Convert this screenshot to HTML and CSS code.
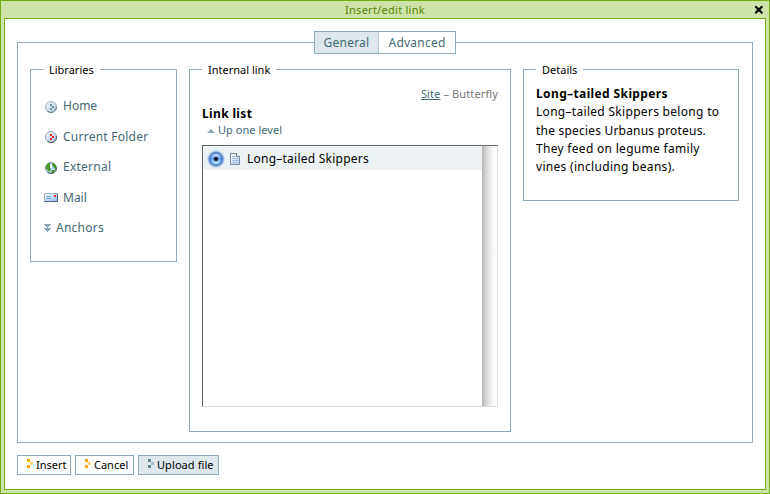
FILE: index.html
```html
<!DOCTYPE html>
<html lang="en">
<head>
<meta charset="utf-8">
<title>Insert/edit link</title>
<link rel="stylesheet" href="styles.css">
</head>
<body>
<div class="window">
  <header class="titlebar"><span class="title">Insert/edit link</span>
    <svg class="close" width="10" height="10" viewBox="0 0 10 10"><path d="M1.3 1.3l7 7M8.3 1.3l-7 7" stroke="#000" stroke-width="2.2"/></svg>
  </header>
  <main class="content">
    <section class="main-panel">
      <nav class="tabs"><a class="tab active">General</a><a class="tab">Advanced</a></nav>
      <div class="columns">
        <section class="group libraries">
          <h2 class="legend">Libraries</h2>
          <ul class="lib-list">
            <li><svg class="ico" width="14" height="14" viewBox="0 0 14 14"><defs><linearGradient id="ball" x2="1" y2="1"><stop stop-color="#f4fafc"/><stop offset="1" stop-color="#b3ced8"/></linearGradient></defs><circle cx="7" cy="7" r="5.5" fill="url(#ball)" stroke="#9cb6c0"/><path d="M12.5 7A5.5 5.5 0 0 1 3.5 11.2" fill="none" stroke="#5b7987"/><path d="M6 4h2v2H6zM8 6h2v2H8zM6 8h2v2H6z" fill="#6b909f"/></svg><span>Home</span></li>
            <li><svg class="ico" width="14" height="14" viewBox="0 0 14 14"><defs><linearGradient id="ball2" x2="1" y2="1"><stop stop-color="#f6faff"/><stop offset="1" stop-color="#a5c8f4"/></linearGradient></defs><circle cx="7" cy="7" r="5.5" fill="url(#ball2)" stroke="#a0a3aa"/><path d="M12.5 6A5.5 5.5 0 0 1 3.5 11.2" fill="none" stroke="#4c5057"/><path d="M6 4h2v2H6zM8 6h2v2H8zM6 8h2v2H6z" fill="#e5271c"/></svg><span class="wide">Current Folder</span></li>
            <li><svg class="ico" width="14" height="14" viewBox="0 0 14 14"><circle cx="7" cy="7" r="5.5" fill="#b9d6fa" stroke="#8296a4"/><path d="M2 6l1-3 3-1.5V4l1 2-1 1 1 2-2 2-1-2-2-1zM8 2l3 1 1.5 3v2L11 8 9.5 6 8.5 5zM8 9l2 0 1 1-2 2H7z" fill="#489623"/><path d="M12.5 7A5.5 5.5 0 0 1 3.5 11.2" fill="none" stroke="#4f5f58"/><path d="M6 4h2v3H6z" fill="#f2f9ff"/></svg><span class="wide">External</span></li>
            <li><svg class="ico" width="14" height="14" viewBox="0 0 14 14"><defs><linearGradient id="mail" x2="1" y2="1"><stop stop-color="#fff"/><stop offset="1" stop-color="#90bdf5"/></linearGradient></defs><path d="M.5 2.5h13v8H.5z" fill="url(#mail)" stroke="#a3adba"/><path d="M.5 10.5h13v-8" fill="none" stroke="#566174"/><path d="M2 5.5h5M2 7.5h5" stroke="#6a9fe3"/><path d="M10 4h2v2h-2z" fill="#ee2b20"/></svg><span>Mail</span></li>
            <li class="anchors"><svg class="ico" width="7" height="9" viewBox="0 0 7 9"><path d="M0 0h7v1H6v1H5v1H4v1H3V3H2V2H1V1H0zM0 4h7v1H6v1H5v1H4v1H3V7H2V6H1V5H0z" fill="#86a6b3"/></svg><span class="wide">Anchors</span></li>
          </ul>
        </section>
        <section class="group internal">
          <h2 class="legend">Internal link</h2>
          <p class="crumbs"><a>Site</a> – Butterfly</p>
          <h3 class="list-title">Link list</h3>
          <p class="up"><i class="tri"></i><span>Up one level</span></p>
          <div class="listbox">
            <div class="rows">
              <div class="row">
                <svg class="radio" width="18" height="18" viewBox="0 0 18 18"><defs><linearGradient id="orb" x2="0" y2="1"><stop stop-color="#dceaff"/><stop offset=".45" stop-color="#5f9aea"/><stop offset="1" stop-color="#c8f6ff"/></linearGradient><radialGradient id="halo"><stop offset=".72" stop-color="#5b93d6"/><stop offset="1" stop-color="#a9caec" stop-opacity=".35"/></radialGradient></defs><circle cx="9" cy="9" r="9" fill="url(#halo)"/><circle cx="9" cy="9" r="6" fill="url(#orb)" stroke="#2f62b4" stroke-width=".9"/><circle cx="9" cy="9" r="2.1" fill="#050b1b"/></svg>
                <svg class="page" width="10" height="12" viewBox="0 0 10 12"><defs><linearGradient id="sheet" x2="1" y2="1"><stop stop-color="#fff"/><stop offset="1" stop-color="#a9cbf5"/></linearGradient></defs><path d="M.5.5h6l3 3v8h-9z" fill="url(#sheet)" stroke="#7d8b99"/><path d="M6.5.5v3h3" fill="#fff" stroke="#6d7985"/><path d="M2 3.5h3M2 5.5h6M2 7.5h6M2 9.5h6" stroke="#a3bddb"/></svg>
                <span class="wide">Long–tailed Skippers</span>
              </div>
            </div>
            <div class="scroll"></div>
          </div>
        </section>
        <section class="group details">
          <h2 class="legend">Details</h2>
          <div class="desc"><strong>Long–tailed Skippers</strong><br>Long–tailed Skippers belong to<br><span class="snug">the species Urbanus proteus.</span><br>They feed on legume family<br>vines (including beans).</div>
        </section>
      </div>
    </section>
    <footer class="buttons">
      <button class="btn insert"><svg width="6" height="9" viewBox="0 0 6 9"><path d="M0 0h3v3H0zM0 6h3v3H0z" fill="#ffa500"/><path d="M3 3h3v3H3z" fill="#ffd27f"/></svg><span>Insert</span></button>
      <button class="btn cancel"><svg width="6" height="9" viewBox="0 0 6 9"><path d="M0 0h3v3H0zM0 6h3v3H0z" fill="#ffa500"/><path d="M3 3h3v3H3z" fill="#ffd27f"/></svg><span>Cancel</span></button>
      <button class="btn upload"><svg width="6" height="9" viewBox="0 0 6 9"><path d="M0 0h3v3H0zM0 6h3v3H0z" fill="#5f8796"/><path d="M3 3h3v3H3z" fill="#a5bdc8"/></svg><span>Upload file</span></button>
    </footer>
  </main>
</div>
</body>
</html>
```
FILE: styles.css
```css
* { box-sizing: border-box; }
body { margin: 0; background: #fff; color: #000; font: 12px/18px "Noto Sans", "Open Sans", sans-serif; }
h2, h3, p, ul { margin: 0; padding: 0; list-style: none; font-weight: 400; }
.window { width: 770px; height: 494px; background: #cee3a8; border: 1px solid #74ae0b; padding: 0 3px 3px; display: flex; flex-direction: column; }
.titlebar { height: 17px; flex: none; display: flex; align-items: center; justify-content: center; color: #578500; font-size: 11px; line-height: 17px; letter-spacing: .27px; position: relative; }
.close { position: absolute; right: 2px; top: 4px; }
.content { flex: 1; background: #fff; border: 1px solid #74ae0b; padding: 23px 12px 0; }
.main-panel { width: 736px; height: 401px; border: 1px solid #8cacbb; padding: 0 12px; }
.tabs { display: flex; width: 142px; height: 23px; margin: -12px 0 0 284px; border: 1px solid #8cacbb; background: #fff; color: #436976; line-height: 21px; }
.tab { flex: 1; text-align: center; white-space: nowrap; letter-spacing: .22px; }
.tab.active { flex: 0 0 64px; background: #dee7ec; border-right: 1px dotted #8cacbb; }
.columns { display: flex; align-items: flex-start; gap: 12px; margin-top: 15px; }
.group { border: 1px solid #8cacbb; }
.libraries { width: 147px; height: 193px; }
.internal { width: 322px; height: 363px; padding: 0 12px; }
.details { width: 216px; height: 132px; }
.legend { width: max-content; height: 18px; margin: -9px 0 0 12px; padding: 0 6px; background: #fff; font-size: 11px; white-space: nowrap; }
.internal .legend { margin-left: 0; }
.lib-list { padding: 12px 0 0 13px; color: #436976; }
.lib-list li { height: 30.5px; display: flex; align-items: center; white-space: nowrap; }
.wide { letter-spacing: .24px; }
.ico { margin: 1px 5px 0 0; flex: none; }
.crumbs { text-align: right; font-size: 11px; letter-spacing: .12px; color: #76797c; margin-top: 6px; height: 18px; }
.crumbs a { color: #436976; text-decoration: underline; }
.list-title { font-size: 12px; font-weight: 700; letter-spacing: .35px; margin-top: 2px; height: 18px; }
.up { display: flex; align-items: center; color: #436976; font-size: 11px; letter-spacing: .04px; height: 16px; line-height: 16px; padding-left: 5px; margin-top: -1px; }
.tri { border: 4px solid transparent; border-top: 0; border-bottom: 4px solid #8cacbb; margin: 1px 3px 0 0; }
.listbox { display: flex; width: 296px; height: 262px; margin-top: 7px; border: 1px solid; border-color: #666 #ddd #ddd #666; }
.rows { flex: 1; }
.row { display: flex; align-items: center; height: 24px; background: #edf3f5; padding: 2px 0 0 4px; white-space: nowrap; }
.page { margin: 0 7px 0 5px; }
.scroll { width: 15px; background: linear-gradient(90deg, #b6b6b6, #d8d8d8 30%, #f4f4f4 65%, #fff); }
.desc { padding: 6px 0 0 12px; line-height: 18.25px; letter-spacing: .3px; white-space: nowrap; }
.desc strong { letter-spacing: .38px; }
.snug { letter-spacing: .2px; }
.buttons { display: flex; gap: 4px; margin-top: 12px; }
.btn { display: flex; align-items: flex-start; height: 20px; border: 1px solid #8cacbb; background: #fff; padding: 0 0 0 9px; font: 11px/18px "Noto Sans", sans-serif; color: #000; white-space: nowrap; }
.btn svg { flex: none; margin: 3px 3px 0 0; }
.insert { width: 54px; }
.cancel { width: 59px; }
.upload { width: 81px; background: #dee7ec; letter-spacing: .08px; }
```
